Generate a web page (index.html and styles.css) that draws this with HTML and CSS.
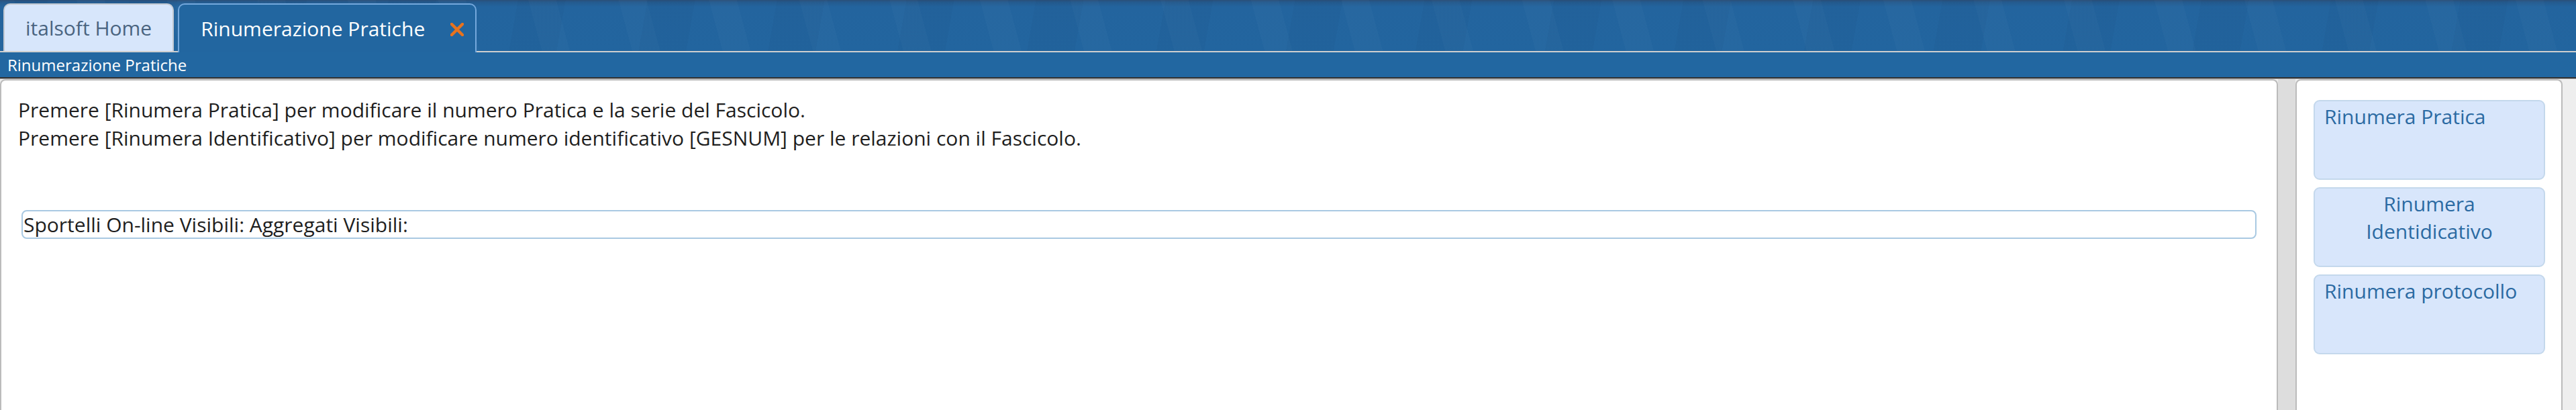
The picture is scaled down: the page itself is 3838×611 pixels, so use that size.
FILE: index.html
```html
<!DOCTYPE html>
<html lang="it">
<head>
    <meta charset="UTF-8">
    <title>Rinumerazione Pratiche</title>
    <link rel="stylesheet" href="styles.css">
</head>
<body>
    <div class="topbar">
        <div class="tab">italsoft Home</div>
        <div class="tab tab-active">
            <span>Rinumerazione Pratiche</span>
            <svg class="tab-close" width="20" height="20" viewBox="0 0 20 20">
                <path d="M2 2 L18 18 M18 2 L2 18" stroke="#e8731e" stroke-width="4.5" stroke-linecap="round"/>
            </svg>
        </div>
    </div>
    <div class="subtitle">Rinumerazione Pratiche</div>

    <div class="main">
        <div class="panel panel-left">
            <div class="info">
                Premere [Rinumera Pratica] per modificare il numero Pratica e la serie del Fascicolo.<br>
                Premere [Rinumera Identificativo] per modificare numero identificativo [GESNUM] per le relazioni con il Fascicolo.
            </div>
            <div class="field">Sportelli On-line Visibili: Aggregati Visibili:</div>
        </div>
        <div class="splitter"></div>
        <div class="panel panel-right">
            <button class="action">Rinumera Pratica</button>
            <button class="action action-center">Rinumera<br>Identidicativo</button>
            <button class="action">Rinumera protocollo</button>
        </div>
        <div class="edge"></div>
    </div>
</body>
</html>
```

FILE: styles.css
```css
body {
    margin: 0;
    font-family: "Open Sans", sans-serif;
    height: 611px;
    overflow: hidden;
    display: flex;
    flex-direction: column;
    background: #eeeeee;
}
.topbar {
    height: 78px;
    box-sizing: border-box;
    display: flex;
    align-items: flex-end;
    gap: 6px;
    padding-left: 5px;
    background:
        repeating-linear-gradient(100deg, rgba(10, 40, 80, 0.045) 0px, rgba(10, 40, 80, 0.045) 70px, transparent 70px, transparent 190px),
        repeating-linear-gradient(75deg, rgba(255, 255, 255, 0.02) 0px, rgba(255, 255, 255, 0.02) 40px, transparent 40px, transparent 130px),
        linear-gradient(to bottom, #2b4f78 0px, #245a8e 3px, #23649e 10px, #22659f 100%);
    border-bottom: 2px solid #cfcfcf;
}
.tab {
    height: 71px;
    box-sizing: border-box;
    padding: 0 31px;
    border: 2px solid #c3c9d1;
    border-bottom: none;
    border-radius: 10px 10px 0 0;
    background: #d7e6fb;
    color: #4a6480;
    font-size: 30px;
    display: flex;
    align-items: center;
}
.tab-active {
    background: #2266a0;
    border-color: #74a8dc;
    color: #ffffff;
    height: 73px;
    margin-bottom: -2px;
    padding: 0 17px 0 32px;
    gap: 38px;
}
.tab-close {
    margin-top: 2px;
}
.subtitle {
    height: 37px;
    background: #2267a1;
    color: #ffffff;
    font-size: 24px;
    line-height: 37px;
    padding-left: 11px;
    border-bottom: 2px solid #333333;
}
.main {
    flex: 1;
    display: flex;
    border-top: 1px solid #bbbbbb;
    min-height: 0;
}
.panel {
    background: #ffffff;
    border: 2px solid #bbbbbb;
    border-bottom: none;
    border-radius: 8px 8px 0 0;
    box-sizing: border-box;
}
.panel-left {
    flex: 1;
    padding: 23px 30px 0 25px;
}
.info {
    font-size: 30px;
    line-height: 42px;
    color: #1e1e1e;
}
.field {
    margin-top: 86px;
    margin-left: 5px;
    height: 43px;
    box-sizing: border-box;
    border: 2px solid #a9c9e2;
    border-radius: 8px;
    padding-left: 1px;
    font-size: 30px;
    line-height: 39px;
    color: #1e1e1e;
}
.splitter {
    width: 26px;
    background: #dddddd;
}
.panel-right {
    width: 398px;
    padding: 29px 0 0 25px;
    display: flex;
    flex-direction: column;
    gap: 11px;
}
.action {
    width: 345px;
    height: 119px;
    box-sizing: border-box;
    background: #d8e6fb;
    border: 2px solid #c4d8ec;
    border-radius: 9px;
    font-family: "Open Sans", sans-serif;
    font-size: 30px;
    line-height: 41px;
    color: #2b6aa2;
    text-align: left;
    padding: 2px 14px 0 14px;
    display: flex;
    align-items: flex-start;
    cursor: pointer;
}
.action-center {
    justify-content: center;
    text-align: center;
}
.edge {
    width: 20px;
    background: #eeeeee;
}
```
